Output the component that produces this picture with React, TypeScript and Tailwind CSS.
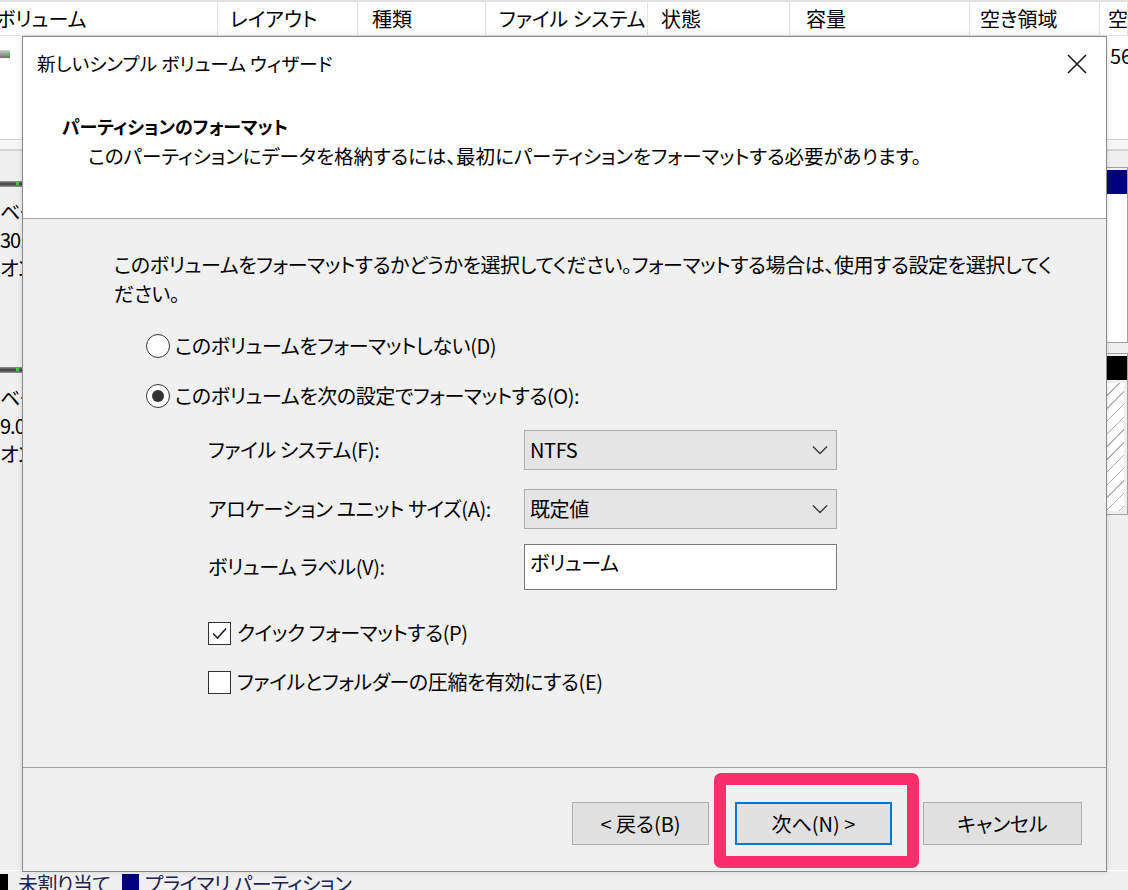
import React from 'react';

const headers = [
  { cls: 'w-[218px] pl-0', label: 'ボリューム', inner: '-ml-[4px]' },
  { cls: 'w-[140px] pl-[12px]', label: 'レイアウト', inner: '' },
  { cls: 'w-[128px] pl-[14px]', label: '種類', inner: '' },
  { cls: 'w-[162px] pl-[13px]', label: 'ファイル システム', inner: '' },
  { cls: 'w-[142px] pl-[13px]', label: '状態', inner: '' },
  { cls: 'w-[180px] pl-[16px]', label: '容量', inner: '' },
  { cls: 'w-[130px] pl-[10px]', label: '空き領域', inner: '' },
  { cls: 'flex-1 pl-[8px]', label: '空き領域の割合', inner: '' },
];

function DiskLabel({ size }: { size: string }) {
  return (
    <div className="w-[200px] shrink-0 bg-[#f0f0f0] border-r border-[#a0a0a0]">
      <div className="relative mt-[14px] h-[6px] w-full bg-gradient-to-b from-[#9a9a9a] via-[#3c3c3c] to-[#9a9a9a]">
        <div className="absolute left-[16px] top-[1px] h-[3px] w-[3px] bg-[#3bd43b]" />
      </div>
      <div className="pt-[11px] text-[20px] leading-[28px] whitespace-nowrap tracking-[-1px]">
        <div>ベーシック</div>
        <div>{size}</div>
        <div>オンライン</div>
      </div>
    </div>
  );
}

function Background() {
  return (
    <div className="flex h-[890px] flex-col bg-[#f0f0f0]">
      <div className="flex h-[36px] shrink-0 border-t-2 border-b border-[#e3e3e3] bg-white text-[20px]">
        {headers.map((h) => (
          <div key={h.label} className={`${h.cls} flex items-center overflow-hidden whitespace-nowrap border-r border-[#e3e3e3]`}>
            <span className={h.inner}>{h.label}</span>
          </div>
        ))}
      </div>
      <div className="flex h-[103px] shrink-0 bg-white text-[20px]">
        <div className="w-[1106px] shrink-0 pt-[14px]">
          <div className="flex h-[8px] w-[10px] items-center justify-end bg-gradient-to-b from-[#d0d0d0] to-[#6e6e6e]">
            <div className="h-[3px] w-[3px] bg-[#3bd43b]" />
          </div>
        </div>
        <div className="shrink-0 whitespace-nowrap pl-[4px] pt-[6px] leading-[28px]">56 GB</div>
      </div>
      <div className="h-[12px] shrink-0 border-t border-b-2 border-[#d4d4d4] bg-[#f7f7f7]" />
      <div className="flex flex-col pt-[16px] text-[20px]">
        <div className="flex h-[176px]">
          <DiskLabel size="30.00 GB" />
          <div className="flex flex-1 flex-col border border-[#a0a0a0]">
            <div className="mt-[2px] h-[24px] bg-[#000080]" />
            <div className="flex-1 bg-white" />
          </div>
        </div>
        <div className="h-[10px]" />
        <div className="flex h-[162px]">
          <DiskLabel size="9.00 GB" />
          <div className="flex flex-1 flex-col border border-[#a0a0a0]">
            <div className="mt-[2px] h-[24px] bg-black" />
            <div className="m-[3px] flex-1 bg-[repeating-linear-gradient(135deg,#ffffff_0px,#ffffff_8px,#b4b4b4_8px,#b4b4b4_9px)]" />
          </div>
        </div>
      </div>
      <div className="flex-1" />
      <div className="flex h-[20px] shrink-0 items-start overflow-hidden border-t border-[#ffffff] text-[20px] leading-[24px] tracking-[-0.6px]">
        <div className="-ml-[8px] mt-[3px] h-[17px] w-[16px] bg-black" />
        <span className="ml-[10px] mt-[1px] text-[#202050]">未割り当て</span>
        <div className="ml-[12px] mt-[3px] h-[17px] w-[17px] bg-[#000080]" />
        <span className="ml-[6px] mt-[1px] text-[#202050]">プライマリ パーティション</span>
      </div>
    </div>
  );
}

function Radio({ checked, label }: { checked: boolean; label: string }) {
  return (
    <div className="flex h-[30px] items-center">
      <div className="flex h-[24px] w-[24px] items-center justify-center rounded-full border-[1.5px] border-[#333333] bg-white">
        {checked && <div className="h-[12px] w-[12px] rounded-full bg-[#333333]" />}
      </div>
      <span className="ml-[5px]">{label}</span>
    </div>
  );
}

function Check({ checked, label }: { checked: boolean; label: string }) {
  return (
    <div className="flex h-[30px] items-center">
      <div className="flex h-[23px] w-[23px] items-center justify-center border-[1.5px] border-[#333333] bg-white">
        {checked && (
          <svg width="17" height="17" viewBox="0 0 17 17">
            <path d="M2 8.5 L6.5 13 L15 3.5" fill="none" stroke="#222222" strokeWidth="1.6" />
          </svg>
        )}
      </div>
      <span className="ml-[6px]">{label}</span>
    </div>
  );
}

function Chevron() {
  return (
    <svg width="16" height="10" viewBox="0 0 16 10">
      <path d="M1 1.5 L8 8.5 L15 1.5" fill="none" stroke="#333333" strokeWidth="1.3" />
    </svg>
  );
}

function Combo({ value }: { value: string }) {
  return (
    <div className="flex h-[40px] w-[313px] items-center justify-between border border-[#adadad] bg-[#e5e5e5] pl-[5px] pr-[8px]">
      <span>{value}</span>
      <Chevron />
    </div>
  );
}

function Dialog() {
  return (
    <div className="absolute left-[22px] top-[36px] flex h-[836px] w-[1085px] flex-col border border-[#8a8a8a] bg-[#f0f0f0] shadow-[0_0_6px_rgba(0,0,0,0.12)]">
      <div className="h-[181px] shrink-0 bg-white">
        <div className="flex h-[53px] items-center justify-between pl-[14px] pr-[19px]">
          <span className="text-[18.7px]">新しいシンプル ボリューム ウィザード</span>
          <svg width="20" height="20" viewBox="0 0 20 20">
            <path d="M1 1 L19 19 M19 1 L1 19" stroke="#111111" strokeWidth="1.5" />
          </svg>
        </div>
        <div className="pl-[39px] pt-[21px] leading-[30px]">
          <div className="text-[18px] font-bold">パーティションのフォーマット</div>
          <div className="pl-[26px] text-[19.5px]">このパーティションにデータを格納するには、最初にパーティションをフォーマットする必要があります。</div>
        </div>
      </div>
      <div className="h-[1px] shrink-0 bg-[#a0a0a0]" />
      <div className="h-[548px] shrink-0 pl-[91px] pt-[31px] text-[20px] tracking-[-0.4px]">
        <div className="whitespace-nowrap leading-[29px]">
          このボリュームをフォーマットするかどうかを選択してください。フォーマットする場合は、使用する設定を選択してく
          <br />
          ださい。
        </div>
        <div className="ml-[32px] mt-[23px] flex flex-col gap-[20px]">
          <Radio checked={false} label="このボリュームをフォーマットしない(D)" />
          <Radio checked={true} label="このボリュームを次の設定でフォーマットする(O):" />
        </div>
        <div className="ml-[94px] mt-[19px] flex flex-col">
          <div className="flex items-center">
            <span className="w-[316px]">ファイル システム(F):</span>
            <Combo value="NTFS" />
          </div>
          <div className="mt-[19px] flex items-center">
            <span className="w-[316px]">アロケーション ユニット サイズ(A):</span>
            <Combo value="既定値" />
          </div>
          <div className="mt-[15px] flex items-center">
            <span className="w-[316px]">ボリューム ラベル(V):</span>
            <div className="h-[46px] w-[313px] border border-[#7a7a7a] bg-white pl-[5px] pt-[3px] leading-[30px]">ボリューム</div>
          </div>
          <div className="mt-[28px] flex flex-col gap-[19px]">
            <Check checked={true} label="クイック フォーマットする(P)" />
            <Check checked={false} label="ファイルとフォルダーの圧縮を有効にする(E)" />
          </div>
        </div>
      </div>
      <div className="h-[1px] shrink-0 bg-[#a0a0a0]" />
      <div className="relative flex flex-1 justify-end pr-[24px] pt-[34px] text-[20px]">
        <div className="flex h-[43px] gap-[26px]">
          <button className="w-[137px] border border-[#adadad] bg-[#e1e1e1]">&lt; 戻る(B)</button>
          <button className="mr-[5px] w-[157px] border-2 border-[#0078d7] bg-[#e1e1e1]">次へ(N) &gt;</button>
          <button className="w-[159px] border border-[#adadad] bg-[#e1e1e1]">キャンセル</button>
        </div>
        <div className="absolute left-[691px] top-[5px] h-[95px] w-[205px] rounded-[7px] border-[12px] border-[#fb2e6c]" />
      </div>
    </div>
  );
}

export default function App() {
  return (
    <div className="relative h-[890px] w-[1128px] overflow-hidden font-['Noto_Sans_CJK_JP','Noto_Sans',sans-serif] text-black [font-feature-settings:'palt']">
      <Background />
      <Dialog />
    </div>
  );
}
